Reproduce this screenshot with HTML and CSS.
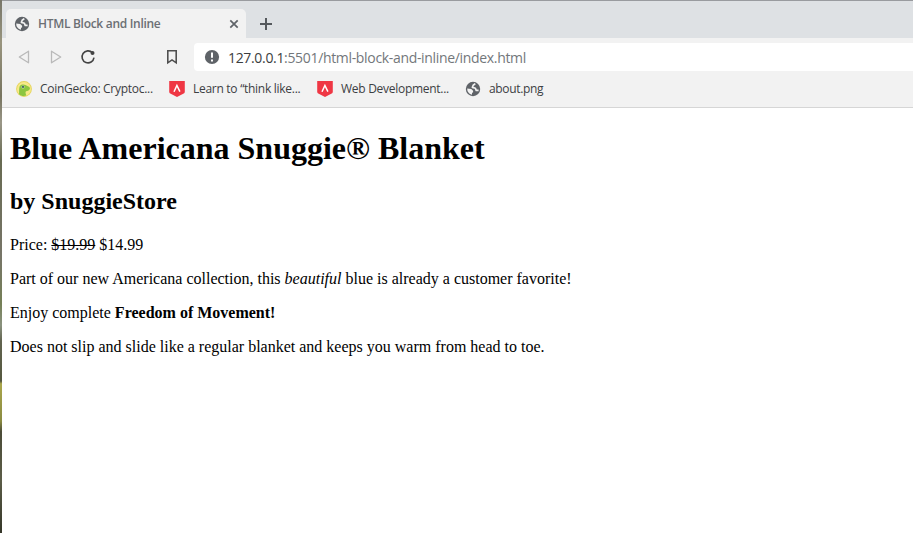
FILE: index.html
```html
<!DOCTYPE html>
<html lang="en">
<head>
<meta charset="utf-8">
<title>HTML Block and Inline</title>
<link rel="stylesheet" href="styles.css">
</head>
<body>
<svg class="defs" width="0" height="0">
  <symbol id="globe" viewBox="0 0 16 16">
    <circle cx="8" cy="8" r="7.2" fill="#5f6368"/>
    <path d="M10.300 2.600 8.200 4.200 7.400 6.400 10.400 7.300 11.200 9.400 13.600 9.300" fill="none" stroke="#f2f2f2" stroke-width="1.700" stroke-linejoin="round"/>
    <path d="M2.200 7.600 6.200 7.900 8.100 9.700 8.100 11.200 7 12.100V13.800A5.900 5.900 0 0 1 2.200 7.600z" fill="#f2f2f2"/>
  </symbol>
  <symbol id="shield" viewBox="0 0 16 16">
    <path d="M.2 0h15.6v10.8c0 .9-.4 1.4-1.1 1.8L8 16l-6.700-3.400C.6 12.200.2 11.700.2 10.800z" fill="#ef3744"/>
    <path d="M5 10.700 7.900 4.500l3 6.200" fill="none" stroke="#fff" stroke-width="1.500"/>
  </symbol>
</svg>
<div class="window">
  <div class="edge"></div>
  <div class="browser">
    <div class="tabs">
      <div class="tab">
        <svg class="icon16"><use href="#globe"/></svg>
        <span class="title">HTML Block and Inline</span>
        <svg class="close" viewBox="0 0 10 10"><path d="M1.300 1.300l7.400 7.400M8.700 1.300 1.300 8.700"/></svg>
      </div>
      <svg class="plus" viewBox="0 0 12 12"><path d="M6 0v12M0 6h12"/></svg>
    </div>
    <div class="toolbar">
      <svg class="arrow" viewBox="0 0 12 14"><path d="M10.500 1.200v11.600L1.300 7z"/></svg>
      <svg class="arrow forward" viewBox="0 0 12 14"><path d="M1.500 1.200v11.600L10.700 7z"/></svg>
      <svg class="reload" viewBox="0 0 16 16"><path d="M12.400 3.700A6 6 0 1 0 14 8.700" /><circle cx="12.500" cy="4" r="2"/></svg>
      <svg class="bookmark" viewBox="0 0 12 16"><path d="M1.800 1.800h8.400v12L6 10.900l-4.200 2.900z"/></svg>
      <div class="address">
        <svg class="icon16" viewBox="0 0 16 16"><circle cx="8" cy="8" r="7.100" fill="#5f6368"/><path d="M8 3.500v5.300M8 10.500v2" stroke="#fff" stroke-width="2"/></svg>
        <span class="url"><b>127.0.0.1</b>:5501/html-block-and-inline/index.html</span>
      </div>
    </div>
    <div class="bookmarks">
      <div class="mark gecko">
        <svg class="icon16" viewBox="0 0 16 16"><circle cx="8" cy="8" r="7.900" fill="#e5d45b"/><circle cx="8" cy="8" r="7" fill="#f7e988"/><path d="M3 13.200c.3-2-.1-3.500.3-6.200.2-2 1.200-3.400 3.400-3.500 2.300-.1 3.300.9 4.700 1.500 1.500.6 2.700 1.400 2.500 2.700-.3 1.700-2.300 2.200-3.700 2.600-1.100.5-.6 2.400.1 4.200-2.500.9-5.300.5-7.300-1.300z" fill="#8cc63f"/><circle cx="7" cy="5.900" r="1.500" fill="#d7e8c4"/><circle cx="7" cy="5.900" r="1.100" fill="#45615e"/></svg>
        <span>CoinGecko: Cryptoc...</span>
      </div>
      <div class="mark learn"><svg class="icon16"><use href="#shield"/></svg><span>Learn to “think like...</span></div>
      <div class="mark web"><svg class="icon16"><use href="#shield"/></svg><span>Web Development...</span></div>
      <div class="mark about"><svg class="icon16"><use href="#globe"/></svg><span>about.png</span></div>
    </div>
    <main class="page">
      <h1>Blue Americana Snuggie® Blanket</h1>
      <h2>by SnuggieStore</h2>
      <p>Price: <s>$19.99</s> $14.99</p>
      <p>Part of our new Americana collection, this <em>beautiful</em> blue is already a customer favorite!</p>
      <p>Enjoy complete <strong>Freedom of Movement!</strong></p>
      <p>Does not slip and slide like a regular blanket and keeps you warm from head to toe.</p>
    </main>
  </div>
</div>
</body>
</html>
```
FILE: styles.css
```css
* { box-sizing: border-box; }
body { margin: 0; overflow: hidden; background: #fff; }
svg { display: block; flex: none; }
.defs { position: absolute; }
.window { display: flex; height: 533px; }
.edge {
  width: 2px;
  background: linear-gradient(#777669, #99957f 8%, #77745f 18%, #9a9788 23%, #686b52 30%, #777568 48%, #758057 57%, #8a927f 61%, #626450 64%, #55583f 71.5%, #aaa64b 72%, #8a8b41 79%, #4b4c38 81%, #5c5d48 90%, #353729);
}
.browser { flex: 1; min-width: 0; border-top: 1px solid #999b9f; }
.tabs { display: flex; height: 37px; padding: 8px 0 0 4px; background: #dee1e4; }
.tab {
  display: flex; align-items: center; width: 240px; height: 29px; padding: 0 7px 0 8px;
  background: #f2f2f2; border-radius: 5px 5px 0 0;
  font: 600 12px "Open Sans", sans-serif; color: #6b6f74;
}
.icon16 { width: 16px; height: 16px; }
.title { flex: 1; margin-left: 8px; white-space: nowrap; letter-spacing: -0.3px; }
.close { width: 10px; height: 10px; fill: none; stroke: #5f6368; stroke-width: 1.7; }
.plus { width: 12px; height: 12px; margin: 9px 0 0 14px; stroke: #55595d; stroke-width: 2; }
.toolbar { display: flex; align-items: center; height: 38px; padding-left: 16px; background: #f2f2f2; }
.arrow { width: 12px; height: 14px; fill: none; stroke: #b9b9b9; stroke-width: 1.3; stroke-linejoin: round; }
.forward { margin-left: 20px; }
.reload { width: 16px; height: 16px; margin-left: 18px; fill: none; stroke: #444; stroke-width: 1.6; }
.reload circle { fill: #444; stroke: none; }
.bookmark { width: 12px; height: 16px; margin-left: 70px; fill: none; stroke: #505050; stroke-width: 1.6; }
.address {
  display: flex; align-items: center; flex: 1; height: 28px; margin-left: 16px; padding-left: 10px;
  background: #fff; border-radius: 4px 0 0 4px;
  font: 14px "Open Sans", sans-serif; color: #73777b;
}
.url { margin-left: 8px; white-space: nowrap; letter-spacing: -0.33px; }
.url b { font-weight: 400; color: #3b3d40; }
.bookmarks {
  display: flex; align-items: center; height: 32px; padding: 0 0 6px 14px;
  background: #f2f2f2; border-bottom: 1px solid #d6d6d6;
  font: 12px "Open Sans", sans-serif; color: #3c4043;
}
.mark { display: flex; align-items: center; width: 148px; white-space: nowrap; letter-spacing: -0.28px; }
.mark span { margin-left: 8px; }
.about { letter-spacing: -0.33px; }
.gecko { width: 153px; }
.page { padding-left: 8px; font: 16px "Liberation Serif", serif; color: #000; display: flow-root; white-space: nowrap; }
.page h1 { margin: 22px 0 21px; }
.page h2 { margin: 21px 0; }
```
